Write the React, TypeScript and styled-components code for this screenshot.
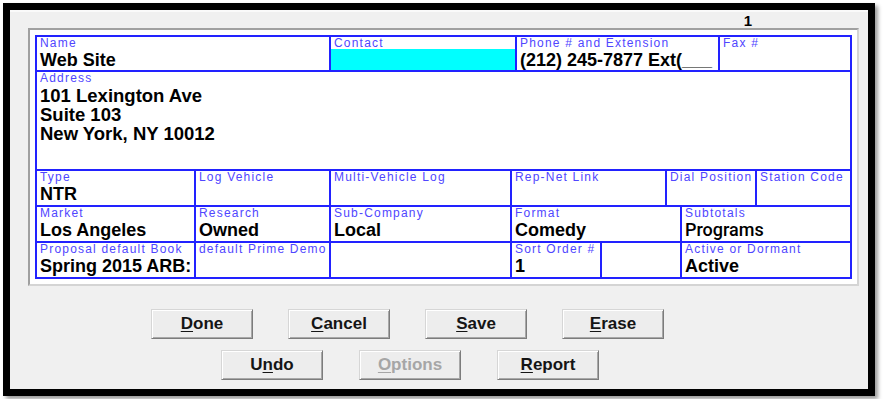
import React from "react";
import styled, { createGlobalStyle } from "styled-components";

const GlobalStyle = createGlobalStyle`
  body {
    margin: 0;
    background: #ffffff;
    font-family: "Liberation Sans", Arial, sans-serif;
  }
`;

type CellDef = {
  label?: string;
  value?: string | string[];
  fill?: boolean;
  light?: boolean;
};

type RowDef = {
  height: number;
  cols: number[];
  cells: CellDef[];
};

const rows: RowDef[] = [
  {
    height: 33,
    cols: [292, 184, 201, 130],
    cells: [
      { label: "Name", value: "Web Site" },
      { label: "Contact", fill: true },
      { label: "Phone # and Extension", value: "(212) 245-7877 Ext(___" },
      { label: "Fax #" },
    ],
  },
  {
    height: 97,
    cols: [813],
    cells: [
      {
        label: "Address",
        value: ["101 Lexington Ave", "Suite 103", "New York, NY 10012"],
      },
    ],
  },
  {
    height: 34,
    cols: [157, 133, 179, 153, 88, 93],
    cells: [
      { label: "Type", value: "NTR" },
      { label: "Log Vehicle" },
      { label: "Multi-Vehicle Log" },
      { label: "Rep-Net Link" },
      { label: "Dial Position" },
      { label: "Station Code" },
    ],
  },
  {
    height: 34,
    cols: [157, 133, 179, 168, 168],
    cells: [
      { label: "Market", value: "Los Angeles" },
      { label: "Research", value: "Owned" },
      { label: "Sub-Company", value: "Local" },
      { label: "Format", value: "Comedy" },
      { label: "Subtotals", value: "Programs", light: true },
    ],
  },
  {
    height: 34,
    cols: [157, 133, 179, 88, 78, 168],
    cells: [
      { label: "Proposal default Book", value: "Spring 2015 ARB:" },
      { label: "default Prime Demo" },
      {},
      { label: "Sort Order #", value: "1" },
      {},
      { label: "Active or Dormant", value: "Active" },
    ],
  },
];

const Frame = styled.div`
  margin: 3px;
  width: 872px;
  height: 393px;
  box-sizing: border-box;
  border: 7px solid #000;
  background: #f0f0f0;
  box-shadow: 3px 3px 4px rgba(0, 0, 0, 0.4);
  display: flex;
  flex-direction: column;
`;

const TopStrip = styled.div`
  height: 18px;
  display: flex;
  justify-content: flex-end;
  align-items: center;
  padding-right: 116px;
  font-size: 15px;
  font-weight: 700;
  color: #000;
  border-top: 2px solid #fafafa;
  box-sizing: border-box;
`;

const Panel = styled.div`
  margin-left: 18px;
  width: 831px;
  box-sizing: border-box;
  border: 2px solid;
  border-color: #a0a0a0 #d4d4d4 #d4d4d4 #a0a0a0;
  background: #ffffff;
  padding: 5px;
`;

const Grid = styled.div`
  width: 817px;
  box-sizing: border-box;
  background: #2222ff;
  padding: 2px;
  display: flex;
  flex-direction: column;
  gap: 2px;
`;

const Row = styled.div<{ $cols: string; $height: number }>`
  display: grid;
  grid-template-columns: ${(p) => p.$cols};
  gap: 2px;
  height: ${(p) => p.$height}px;
`;

const Cell = styled.div`
  background: #ffffff;
  overflow: hidden;
  display: flex;
  flex-direction: column;
`;

const Label = styled.div`
  height: 12px;
  line-height: 12px;
  padding-left: 3px;
  font-size: 12px;
  letter-spacing: 1.2px;
  color: #5046ff;
  white-space: nowrap;
`;

const Value = styled.div<{ $fill?: boolean; $light?: boolean }>`
  flex: 1;
  padding: 1px 0 0 3px;
  font-size: 18px;
  line-height: 20px;
  font-weight: ${(p) => (p.$light ? 500 : 700)};
  font-family: ${(p) =>
    p.$light ? "Roboto, 'Liberation Sans', sans-serif" : "inherit"};
  color: #000;
  white-space: nowrap;
  background: ${(p) => (p.$fill ? "#00ffff" : "transparent")};
`;

const AddressValue = styled.div`
  padding: 2px 0 0 3px;
  font-size: 18.5px;
  line-height: 19px;
  font-weight: 700;
  color: #000;
  white-space: nowrap;
`;

const ButtonArea = styled.div`
  margin-top: 23px;
  display: flex;
  flex-direction: column;
  gap: 11px;
`;

const ButtonRow = styled.div<{ $left: number; $gap: number }>`
  display: flex;
  gap: ${(p) => p.$gap}px;
  padding-left: ${(p) => p.$left}px;
`;

const Button = styled.button<{ $disabled?: boolean }>`
  width: 102px;
  height: 30px;
  box-sizing: border-box;
  padding: 0;
  background: #ededed;
  border: 1px solid;
  border-color: #d6d6d6 #7c7c7c #7c7c7c #d6d6d6;
  box-shadow: inset 1px 1px #ffffff, inset -1px -1px #a8a8a8;
  font-family: "Liberation Sans", Arial, sans-serif;
  font-size: 17px;
  font-weight: 700;
  color: ${(p) => (p.$disabled ? "#a6a6a6" : "#151515")};
  u {
    text-underline-offset: 2px;
  }
`;

const buttonsTop: [string, string, string][] = [
  ["", "D", "one"],
  ["", "C", "ancel"],
  ["", "S", "ave"],
  ["", "E", "rase"],
];

const buttonsBottom: [string, string, string, boolean][] = [
  ["U", "n", "do", false],
  ["", "O", "ptions", true],
  ["", "R", "eport", false],
];

export default function App() {
  return (
    <>
      <GlobalStyle />
      <Frame>
        <TopStrip>1</TopStrip>
        <Panel>
          <Grid>
            {rows.map((row, ri) => (
              <Row
                key={ri}
                $cols={row.cols.map((c) => `${c}px`).join(" ")}
                $height={row.height}
              >
                {row.cells.map((cell, ci) => (
                  <Cell key={ci}>
                    {cell.label && <Label>{cell.label}</Label>}
                    {Array.isArray(cell.value) ? (
                      <AddressValue>
                        {cell.value.map((line) => (
                          <div key={line}>{line}</div>
                        ))}
                      </AddressValue>
                    ) : (
                      cell.label && (
                        <Value $fill={cell.fill} $light={cell.light}>
                          {cell.value}
                        </Value>
                      )
                    )}
                  </Cell>
                ))}
              </Row>
            ))}
          </Grid>
        </Panel>
        <ButtonArea>
          <ButtonRow $left={141} $gap={35}>
            {buttonsTop.map(([pre, key, rest]) => (
              <Button key={key + rest}>
                {pre}
                <u>{key}</u>
                {rest}
              </Button>
            ))}
          </ButtonRow>
          <ButtonRow $left={211} $gap={36}>
            {buttonsBottom.map(([pre, key, rest, disabled]) => (
              <Button key={pre + key + rest} $disabled={disabled}>
                {pre}
                <u>{key}</u>
                {rest}
              </Button>
            ))}
          </ButtonRow>
        </ButtonArea>
      </Frame>
    </>
  );
}
